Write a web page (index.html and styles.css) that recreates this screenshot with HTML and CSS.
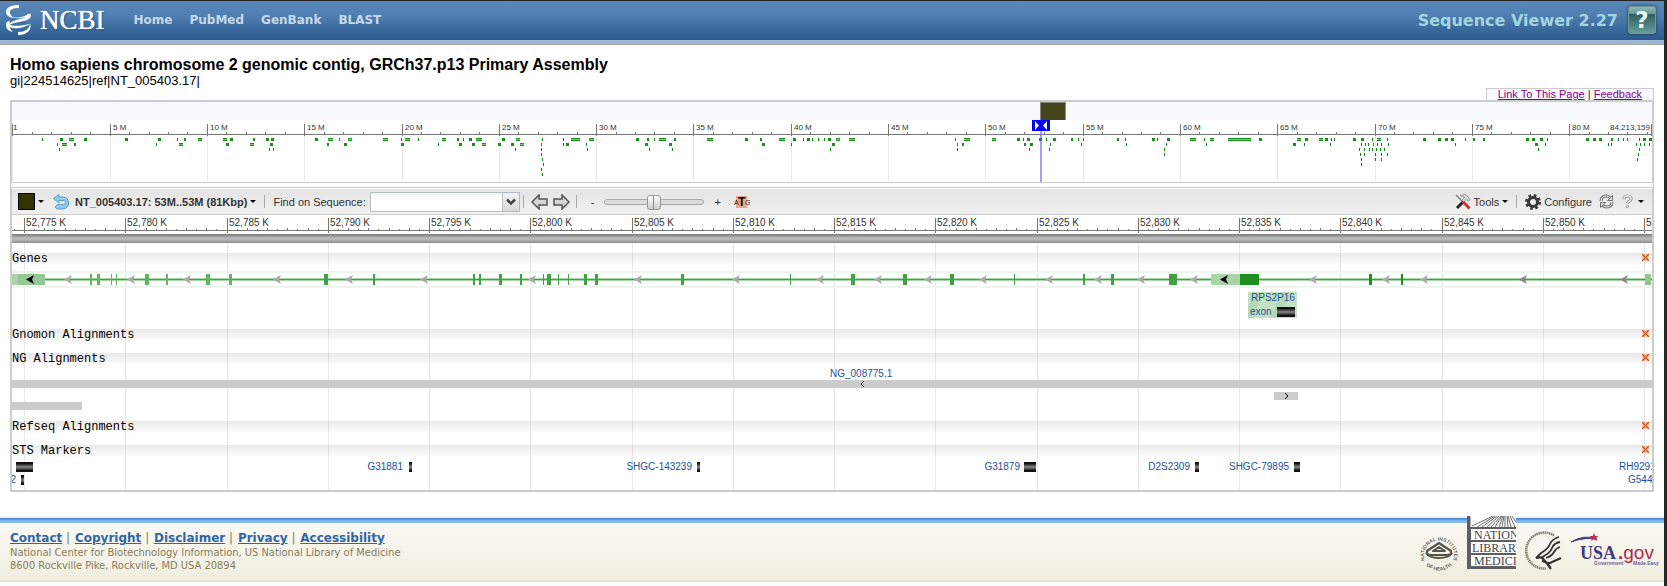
FILE: index.html
```html
<!DOCTYPE html>
<html lang="en">
<head>
<meta charset="utf-8">
<title>NCBI Sequence Viewer 2.27</title>
<link rel="stylesheet" href="styles.css">
</head>
<body>
<header class="masthead">
  <a class="brand" href="#" aria-label="NCBI home">
    <svg class="helix" viewBox="0 0 26 30" aria-hidden="true">
      <path d="M13 0C4 0 0 3 0 7s4 5 8 6c-3-2-4-4-4-6 0-3 4-4 9-4z"/>
      <path d="M1 10c5 4 17 3 21-1q3-1 3 1c0 4-5 6-12 7-5 1-9 2-10 3 2-4 7-5 11-6 3-1 5-1 6-2-6 2-15 2-19-2z"/>
      <path d="M0 19c0 5 2 7 7 8-2-2-3-3-3-5 5 3 16 0 20-3-6 1-14 3-19 1-1-1-2-2-1-4-2 0-4 1-4 3z"/>
      <path d="M24 18c2 6-2 12-12 12v-3c7 0 12-3 12-9z"/>
    </svg>
    <span>NCBI</span>
  </a>
  <nav class="nav">
    <a href="#">Home</a><a href="#">PubMed</a><a href="#">GenBank</a><a href="#">BLAST</a>
  </nav>
  <span class="product">Sequence Viewer 2.27</span>
  <button class="help" type="button" aria-label="Help">?</button>
</header>

<main class="content">
  <h1 class="title">Homo sapiens chromosome 2 genomic contig, GRCh37.p13 Primary Assembly</h1>
  <p class="accession">gi|224514625|ref|NT_005403.17|</p>
  <div class="page-links"><a href="#">Link To This Page</a> | <a href="#">Feedback</a></div>

  <section class="overview" aria-label="Sequence overview">
    <svg class="plot" id="overview"></svg>
  </section>
  <div class="splitter"></div>

  <section class="viewer" aria-label="Graphical view">
    <div class="toolbar">
      <button class="tool swatch-tool" type="button" aria-label="Marker colour"><span class="swatch"></span><span class="caret"></span></button>
      <button class="tool undo" type="button" aria-label="Go back">
        <svg width="16" height="16" viewBox="0 0 16 16"><path d="M6 .5L.5 4.500 6 9V6.500H10q2.500 0 2.500 2T10 10.500H4.500L2 13l2 2h6q5.500-.500 5.500-6T10 3H6z" fill="#8fcbea" stroke="#5a9fc8"/></svg>
      </button>
      <button class="tool range" type="button">NT_005403.17: 53M..53M (81Kbp)<span class="caret"></span></button>
      <span class="sep"></span>
      <label class="find" for="find">Find on Sequence:</label>
      <span class="combo"><input id="find" type="text"><button type="button" aria-label="Show recent searches"><svg width="10" height="8" viewBox="0 0 10 8"><path d="M1 1.500L5 5.500 9 1.500" fill="none" stroke="#444" stroke-width="2.500"/></svg></button></span>
      <span class="sep"></span>
      <button class="tool arrow" type="button" aria-label="Pan left"><svg width="17" height="16" viewBox="0 0 17 16"><path d="M1 8L8 1v4h8v6H8v4z" fill="#d4d4d4" stroke="#555" stroke-width="1.500"/></svg></button>
      <button class="tool arrow" type="button" aria-label="Pan right"><svg width="17" height="16" viewBox="0 0 17 16"><path d="M16 8L9 1v4H1v6h8v4z" fill="#d4d4d4" stroke="#555" stroke-width="1.500"/></svg></button>
      <span class="sep"></span>
      <button class="tool zoom" type="button" aria-label="Zoom out">-</button>
      <input class="slider" type="range" min="0" max="100" value="50" aria-label="Zoom level">
      <button class="tool zoom" type="button" aria-label="Zoom in">+</button>
      <button class="tool atg" type="button" aria-label="Zoom to sequence"><svg width="16" height="14" viewBox="0 0 16 14"><rect x="2" y="1" width="11" height="12" fill="#e9a68c"/><text x="0" y="10" class="atg-side">A</text><text x="11" y="10" class="atg-side">G</text><text x="4" y="11" class="atg-mid">T</text></svg></button>

      <button class="tool tools" type="button">
        <svg width="16" height="16" viewBox="0 0 16 16"><path d="M8.500 7.500L2 14" stroke="#222" stroke-width="3"/><path d="M7 6.500l7.500 8" stroke="#d22f2f" stroke-width="3"/><path d="M1 1l6 6" stroke="#888" stroke-width="1.500"/><path d="M5 1.500Q10-1 13 2.500l2 3.500-2 1-1.500-2L9 8 7 6l2.500-3z" fill="#ddd" stroke="#888" stroke-width=".800"/></svg>
        Tools<span class="caret"></span></button>
      <span class="sep"></span>
      <button class="tool configure" type="button">
        <svg width="16" height="16" viewBox="0 0 16 16"><circle cx="8" cy="8" r="6.500" fill="none" stroke="#3a3a3a" stroke-width="3" stroke-dasharray="2.550"/><circle cx="8" cy="8" r="4.500" fill="#eee" stroke="#3a3a3a" stroke-width="3"/></svg>
        Configure</button>
      <button class="tool refresh" type="button" aria-label="Refresh"><svg width="15" height="15" viewBox="0 0 15 15" fill="none"><path d="M2 7q0-5 5.500-5Q10 2 11.500 4" stroke="#777" stroke-width="3"/><path d="M13 8q0 5-5.500 5Q5 13 3.500 11" stroke="#777" stroke-width="3"/><path d="M2 7q0-5 5.500-5Q10 2 11.500 4M13 8q0 5-5.500 5Q5 13 3.500 11" stroke="#eee"/><path d="M13.500 1.500v5h-5zM1.500 13.500v-5h5z" fill="#ddd" stroke="#777"/></svg></button>
      <button class="tool hint" type="button" aria-label="Help menu"><svg width="11" height="15" viewBox="0 0 12 15" fill="none"><path d="M2 5q0-3.500 4-3.500t4 3Q10 6 7.500 7.500 6 8.500 6 10" stroke="#888" stroke-width="3"/><path d="M2 5q0-3.500 4-3.500t4 3Q10 6 7.500 7.500 6 8.500 6 10" stroke="#eee" stroke-width="1.500"/><circle cx="6" cy="13" r="1.300" fill="#eee" stroke="#888" stroke-width=".800"/></svg><span class="caret"></span></button>
    </div>

    <svg class="plot ruler" id="ruler"></svg>
    <div class="coverage-bar"></div>

    <div class="tracks">
      <svg class="grid" id="grid" aria-hidden="true"></svg>
      <section class="track"><h2>Genes</h2><button class="close" type="button" aria-label="Hide Genes"></button><svg class="plot genes" id="genes"></svg></section>
      <section class="track"><h2>Gnomon Alignments</h2><button class="close" type="button" aria-label="Hide Gnomon Alignments"></button></section>
      <section class="track"><h2>NG Alignments</h2><button class="close" type="button" aria-label="Hide NG Alignments"></button><svg class="plot ng" id="ng"></svg></section>
      <section class="track"><h2>Refseq Alignments</h2><button class="close" type="button" aria-label="Hide Refseq Alignments"></button></section>
      <section class="track"><h2>STS Markers</h2><button class="close" type="button" aria-label="Hide STS Markers"></button><svg class="plot sts" id="sts"></svg></section>
    </div>
  </section>
</main>

<footer class="footer">
  <div class="footer-text">
    <p class="footer-links"><a href="#">Contact</a> | <a href="#">Copyright</a> | <a href="#">Disclaimer</a> | <a href="#">Privacy</a> | <a href="#">Accessibility</a></p>
    <p>National Center for Biotechnology Information, US National Library of Medicine</p>
    <p>8600 Rockville Pike, Rockville, MD USA 20894</p>
  </div>
  <div class="logos">
    <a href="#" class="logo" aria-label="National Institutes of Health">
      <svg width="40" height="40" viewBox="0 0 40 40"><defs><path id="nih-top" d="M5.500 28.500A15 15 0 1 1 34.500 28.500"/><path id="nih-low" d="M2.500 27A18.500 18.500 0 0 0 37.500 27"/></defs>
      <text class="nih"><textPath href="#nih-top" startOffset="50%" text-anchor="middle">NATIONAL INSTITUTES</textPath></text><text class="nih"><textPath href="#nih-low" startOffset="50%" text-anchor="middle">OF HEALTH</textPath></text>
      <g fill="none" stroke="#55554a" stroke-linejoin="round"><path d="M20 12L32 20q1 4-4 4H12q-5 0-4-4z" stroke-width="2.200"/><path d="M20 16l6 4H14z" stroke-width="2"/><path d="M7 22q3 5 13 5t13-5" stroke-width="1.800"/></g></svg></a>
    <a href="#" class="logo nlm" aria-label="National Library of Medicine">
      <svg width="49" height="53" viewBox="0 0 49 53"><path d="M0 0h49v53H0z" fill="#5f5f63"/><path d="M3.500 0H49v11H3.500zM4 13h45v11H4zM4 26h45v11H4zM4 39h45v11H4z" fill="#fff"/>
      <path d="M5 10L26 0M10 11L28 0M15 11L30 0M20 11L32 0M24 11L34 0M28 11l7-11M32 11l4-11M35 11l2-11M38 11V0M41 11L40 0M44 11L41 0M48 11L43 0M49 6L45 0" stroke="#666" stroke-width="1" fill="none"/>
      <text x="7" y="23">NATIONAL</text><text x="5" y="36">LIBRARY OF</text><text x="7" y="49">MEDICINE</text></svg></a>
    <a href="#" class="logo" aria-label="Health and Human Services">
      <svg width="38" height="40" viewBox="0 0 38 40"><path d="M30 4.500A18 18 0 1 0 22 37.500" fill="none" stroke="#888878" stroke-width="2.600" stroke-dasharray="1.600 .500"/><g fill="none" stroke="#333" stroke-width="1.800"><path d="M35 6Q28 8 26 13T17 22l-5 5"/><path d="M36 11Q30 12 28 17T20 25l-3 2"/><path d="M36 16Q32 17 30 21T22 27"/><path d="M12 27q6-2 8 2t6 3l11-5M18 30q5 1 6 4l3 4M21 30l5 6" stroke-width="2.200"/></g></svg></a>
    <a href="#" class="logo" aria-label="USA.gov">
      <svg width="90" height="40" viewBox="0 0 90 40"><path d="M1 11Q14 3 27 8 14 6 1 11z" fill="#454580" stroke="#454580"/><path d="M24 2l1.200 3h3.300l-2.500 2 1 3-3-1.800-3 1.800 1-3-2.500-2h3.300z" fill="#c02d4b"/><text x="10" y="28" class="usa">USA</text><text x="48" y="28" class="gov"><tspan class="dot">.</tspan>gov</text><text x="24" y="34" class="tag">Government</text><text x="63" y="34" class="tag">Made Easy</text></svg></a>
  </div>
</footer>
<script src="app.js"></script>
</body>
</html>
```
FILE: styles.css
```css
* { box-sizing: border-box; }
body {
  margin: 0;
  min-height: 100vh;
  border-top: 1px solid #222;
  border-right: 3px solid #262626;
  background: #fff;
  color: #000;
  font-family: "Liberation Sans", Arial, sans-serif;
  font-size: 11px;
}
h1, h2, p { margin: 0; font-weight: normal; }
button { font: inherit; color: inherit; border: 0; padding: 0; background: none; }
svg { display: block; }

/* Masthead */
.masthead {
  display: flex;
  align-items: center;
  padding: 0 8px 5px 6px;
  height: 44px;
  border-bottom: 1px solid #a9a9a0;
  background: linear-gradient(#5a86b8, #5280b2 30%, #2a5a8b 39px, #9db8d4 39px);
  font-family: "DejaVu Sans", Verdana, sans-serif;
  font-weight: bold;
}
.brand {
  display: flex;
  align-items: center;
  gap: 8px;
  color: #fff;
  text-decoration: none;
  font: 27px/30px "Liberation Serif", serif;
  text-shadow: 0 0 1px #fff, 1px 1px 1px #274f7c;
}
.helix { width: 26px; height: 30px; fill: #fff; }
.nav { display: flex; gap: 17px; margin-left: 29px; }
.nav a { color: #c6d9ec; font-size: 12px; text-decoration: none; }
.product { margin-left: auto; color: #a2d6de; font-size: 16px; }
.help {
  width: 28px;
  height: 28px;
  margin-left: 10px;
  border: 1px solid #6a9c9c;
  border-radius: 3px;
  background: linear-gradient(#8fb9b6, #6a9795 25%, #31605f 28%, #659c98);
  color: #e8f8f8;
  font: bold 23px/26px "DejaVu Sans", sans-serif;
  text-align: center;
  box-shadow: 0 0 3px #234;
}

/* Page heading */
.content { padding: 11px 10px 0; display: flex; flex-direction: column; }
.title { font-size: 16px; line-height: 17px; font-weight: bold; }
.accession { font-size: 13px; line-height: 15px; }
.page-links {
  align-self: flex-end;
  padding: 0 11px;
  border: 1px solid #ccc;
  border-bottom: 0;
  background: #f8f8ff;
  color: #224;
  font-size: 11px;
  line-height: 11px;
}
.page-links a { color: #808; }

/* Overview */
.plot { width: 100%; overflow: hidden; }
.overview {
  border: 2px solid #ccc;
  border-bottom-width: 1px;
  background: linear-gradient(#f7f9ff 18px, #fff 18px);
}
.overview .plot { height: 80px; }
.splitter { height: 4px; border: 1px solid #ccc; border-width: 0 1px; }

/* Viewer */
.viewer { border: 2px solid #ccc; border-top-width: 1px; }
.toolbar {
  display: flex;
  align-items: center;
  height: 27px;
  padding: 0 8px 0 6px;
  border-top: 1px solid #fff;
  border-bottom: 1px solid #ccc;
  background: linear-gradient(#e4e4e4, #f0f0f0);
  color: #333;
  line-height: 14px;
}
.tool { display: flex; align-items: center; gap: 3px; white-space: nowrap; }
.caret { border: 3px solid transparent; border-top-color: #000; border-bottom: 0; }
.swatch { width: 17px; height: 17px; border: 1px solid #000; background: #330; }
.undo { margin-left: 9px; }
.range { margin-left: 6px; font-weight: bold; }
.sep { width: 1px; height: 13px; background: #aaa; }
.range + .sep { margin: 0 8px; }
.find { margin-right: 4px; }
.combo { display: flex; height: 20px; width: 150px; margin-right: 3px; }
.combo input {
  flex: 1;
  min-width: 0;
  border: 1px solid #b8bfc0;
  background: linear-gradient(#eef2f2, #fff 4px);
  font: inherit;
  padding: 0 3px;
}
.combo button {
  display: grid;
  place-items: center;
  width: 17px;
  border: 1px solid #b5b8c8;
  border-left: 0;
  background: linear-gradient(#f4f4f4, #d8d8d8);
}
.arrow { margin-left: 5px; }
.combo + .sep + .arrow { margin-left: 7px; }
.arrow + .sep { margin: 0 14px 0 6px; }
.slider { appearance: none; width: 100px; height: 15px; margin: 0 10px; background: none; }
.slider::-webkit-slider-runnable-track {
  height: 6px;
  border: 1px solid #aaa;
  border-radius: 3px;
  background: #dcdcdc;
}
.slider::-webkit-slider-thumb {
  appearance: none;
  width: 14px;
  height: 15px;
  margin-top: -5px;
  border: 1px solid #999;
  border-radius: 3px;
  background: linear-gradient(90deg, transparent 5px, #888 5px, #888 6px, transparent 6px), linear-gradient(#fff, #ccc);
}
.atg { margin-left: 13px; }
.atg-side { font: 7px "Liberation Sans", sans-serif; fill: #222; }
.atg-mid { font: bold 12px "Liberation Sans", sans-serif; }
.tools { margin-left: auto; }
.tools + .sep { margin: 0 8px; }
.refresh { margin: 0 8px 0 7px; }
.hint { gap: 5px; }

.ruler { height: 19px; }
.coverage-bar {
  height: 9px;
  background: linear-gradient(#777, #999 2px, #bbb 4px, #b5b5b5 6px, #888);
}

/* Tracks */
.tracks { position: relative; padding-top: 10px; }
.grid { position: absolute; inset: 0; width: 100%; height: 100%; z-index: -1; }
.track {
  display: grid;
  grid-template-columns: 1fr auto;
  align-content: start;
  min-height: 24px;
  background: linear-gradient(rgba(0, 0, 0, .09), transparent 13px);
}
.track h2 { font: 12px/12px "Liberation Mono", monospace; height: 16px; }
.close { width: 7px; height: 7px; margin: 1px 3px 0 0; }
.track .plot { grid-column: 1 / 3; }
.genes { height: 60px; }
.ng { height: 52px; }
.sts { height: 29px; }

/* Plot marks */
.tick { fill: #777; }
.line { fill: #e8e8e8; }
.label-s { font-size: 8px; fill: #333; }
.label { font-size: 10px; fill: #333; }
.name { font-size: 10px; fill: #1d509a; }
.intron-edge { fill: #a8d8a8; }
.intron { fill: #43a047; }
.halo { fill: #eef7ee; }
.aln { fill: #ccc; }

/* Footer */
.footer {
  display: flex;
  justify-content: space-between;
  align-items: flex-start;
  margin-top: 24px;
  padding: 0 4px 0 10px;
  border-bottom: 2px solid #e4e2d6;
  background: linear-gradient(#e6f2fc 2px, #4d86c0 2px, #4d86c0 3px, #7db4ea 4px, #8abdf0 7px, #faf9f4 7px, #f1eee0);
  color: #857d5c;
  font: 11px/13px "DejaVu Sans Condensed", "DejaVu Sans", sans-serif;
}
.footer-text { padding: 14px 0 8px; }
.footer-links { font: 12px/16px "DejaVu Sans", sans-serif; }
.footer-links a { color: #2f66a5; font-weight: bold; }
.footer-links a + a { margin-left: 1px; }
.logos { display: flex; gap: 8px; }
.logo { padding-top: 15px; }
.logo.nlm { padding: 0; }
.nih { font: bold 5px "Liberation Sans", sans-serif; fill: #66665a; }
.nlm text { font: 12px "Liberation Serif", serif; fill: #444; }
.usa { font: bold 18px "Liberation Serif", serif; fill: #3d3d7c; }
.gov { font: 19px "Liberation Sans", sans-serif; fill: #b22a48; }
.dot { font-weight: bold; }
.tag { font: bold 5px "Liberation Sans", sans-serif; fill: #66669a; }
```
FILE: app.js
```js
const SPAN = 1640;
const NS = 'http://www.w3.org/2000/svg';

// Overview features by row: [start, width]
const overviewRows = [
  [[30,1],[48,3],[57,5],[72,3],[113,3],[146,3],[165,1],[172,2],[186,4],[211,4],[218,3],[241,2],[254,3],[259,3],[303,3],[316,5],[327,1],[336,4],[371,5],[389,1],[393,5],[406,1],[430,4],[445,2],[451,1],[457,3],[464,6],[490,3],[504,4],[530,1],[551,1],[559,9],[577,5],[624,3],[635,2],[642,1],[647,7],[662,2],[695,6],[733,3],[748,2],[767,6],[781,3],[791,1],[795,3],[800,1],[806,1],[812,1],[816,3],[824,4],[837,6],[943,1],[952,6],[980,4],[1005,3],[1011,1],[1015,3],[1027,3],[1034,1],[1041,3],[1059,2],[1066,1],[1071,1],[1105,2],[1113,1],[1140,3],[1145,1],[1155,3],[1178,6],[1192,1],[1198,4],[1216,23],[1247,3],[1285,4],[1293,3],[1307,4],[1313,3],[1319,1],[1322,1],[1341,3],[1349,3],[1360,1],[1365,4],[1375,1],[1411,3],[1426,3],[1433,3],[1439,3],[1453,1],[1461,2],[1471,2],[1514,3],[1520,3],[1528,3],[1535,1],[1574,3],[1581,3],[1587,3],[1599,2],[1606,1],[1611,1],[1615,1],[1627,1],[1631,3],[1637,3]],
  [[45,1],[50,5],[62,2],[144,1],[167,4],[214,3],[238,4],[258,3],[315,2],[332,3],[389,3],[426,1],[447,3],[460,3],[470,4],[486,3],[499,3],[508,4],[529,1],[551,1],[554,3],[574,1],[633,3],[657,3],[750,3],[779,1],[820,3],[945,1],[950,2],[1012,2],[1018,3],[1038,1],[1069,1],[1114,1],[1154,1],[1194,1],[1281,3],[1292,1],[1318,1],[1349,1],[1353,1],[1356,1],[1361,1],[1365,1],[1369,1],[1376,1],[1443,1],[1523,3],[1533,1],[1596,1],[1599,1],[1624,1],[1628,1],[1632,1],[1637,1]],
  [[47,1],[257,1],[261,1],[503,1],[529,1],[575,1],[637,1],[660,1],[818,1],[945,1],[1017,1],[1037,1],[1152,1],[1347,1],[1352,1],[1357,1],[1360,1],[1364,1],[1368,1],[1372,1],[1526,1],[1627,1]],
  [[529,1],[1152,1],[1348,1],[1352,1],[1363,1],[1369,1],[1375,1],[1626,1]],
  [[530,1],[1349,1],[1363,1],[1369,1],[1625,1]],
  [[531,1],[1349,1]],
  [[529,1]],
  [[530,1]]
];

const exons = [[78,2],[85,3],[99,1],[104,1],[133,4],[154,2],[194,4],[217,3],[312,4],[361,2],[461,2],[467,2],[487,3],[508,2],[531,1],[535,4],[546,1],[556,1],[572,3],[583,3],[669,3],[778,1],[839,4],[891,4],[938,4],[1002,1],[1071,2],[1099,3],[1157,8],[1357,3],[1389,2]];
const strandArrows = [52,115,171,261,333,408,516,622,720,804,862,912,967,1033,1082,1125,1178,1297,1370,1408,1507,1608];
const markers = [
  ['', 0, 4, 17, 0], ['2', 4, 9, 3, 1], ['G31881', 391, 397, 3, 0],
  ['SHGC-143239', 680, 685, 3, 0], ['G31879', 1008, 1012, 12, 0],
  ['D2S2309', 1178, 1183, 4, 0], ['SHGC-79895', 1277, 1282, 6, 0]
];

function add(parent, tag, attrs, text) {
  const node = document.createElementNS(NS, tag);
  for (const key in attrs) node.setAttribute(key, attrs[key]);
  if (text !== undefined) node.textContent = text;
  parent.append(node);
  return node;
}

function draw() {
  const get = id => document.getElementById(id);
  const scale = get('ruler').getBoundingClientRect().width / SPAN;
  const X = v => Math.round(v * scale);
  const rect = (svg, x, y, w, h, attrs) =>
    add(svg, 'rect', Object.assign({ x: X(x), y, width: w, height: h }, attrs));
  const wide = (svg, x, y, w, h, attrs) => rect(svg, x, y, X(x + w) - X(x), h, attrs);
  const text = (svg, x, y, cls, value, anchor) =>
    add(svg, 'text', { x: X(x), y, class: cls, 'text-anchor': anchor || 'start' }, value);
  for (const id of ['overview', 'ruler', 'grid', 'genes', 'ng', 'sts']) get(id).replaceChildren();

  // Overview: scale, features and the visible range
  const ov = get('overview');
  wide(ov, 0, 32, SPAN, 1, { class: 'tick' });
  for (let m = 0; m <= 84; m++) {
    const x = m * 19.46 + 0.3;
    if (m % 5) { rect(ov, x, 30, 1, 2, { class: 'tick' }); continue; }
    rect(ov, x, 34, 1, 45, { class: 'line' });
    rect(ov, x, 22, 1, 12, { class: 'tick' });
    text(ov, x + (m ? 3 : 1), 28, 'label-s', m ? m + ' M' : '1');
  }
  rect(ov, 1639, 22, 1, 12, { class: 'tick' });
  text(ov, 1638, 28, 'label-s', '84,213,159', 'end');
  overviewRows.forEach((row, r) => row.forEach(([x, w]) => {
    const y = 36 + r * 5;
    rect(ov, x, y, w, 3, { fill: w > 1 ? '#189018' : '#0a8a0a' });
    if (w > 3) rect(ov, x, y + 1, w, 1, { fill: '#7cc97c' });
  }));
  rect(ov, 1028, 0, 26, 18, { fill: '#888' });
  rect(ov, 1029, 1, 24, 17, { fill: '#47451b' });
  rect(ov, 1028, 29, 2, 51, { fill: '#5050ff', opacity: 0.55 });
  rect(ov, 1020, 18, 18, 11, { fill: '#00f' });
  const f = X(1020);
  add(ov, 'path', { d: `M${f + 3} 19l4 4.5-4 4.5zM${f + 15} 19l-4 4.5 4 4.5z`, fill: '#fff' });

  // Ruler and grid
  const ruler = get('ruler');
  wide(ruler, 0, 15, SPAN, 1, { class: 'tick' });
  for (let i = -1; i < 163; i++) {
    const x = 12 + i * 10.125;
    if (i % 10) { rect(ruler, x, i % 2 ? 14 : 13, 1, i % 2 ? 1 : 2, { class: 'tick' }); continue; }
    rect(ruler, x, 3, 1, 15, { class: 'tick' });
    text(ruler, x + 2, 11, 'label', '52,' + (775 + i / 2) + ' K');
    rect(get('grid'), x, 0, 1, 300, { class: 'line' });
  }

  // Genes
  const g = get('genes');
  wide(g, 0, 2, SPAN, 2, { class: 'halo' });
  wide(g, 0, 17, SPAN, 2, { class: 'halo' });
  wide(g, 0, 9, SPAN, 3, { class: 'intron-edge' });
  wide(g, 0, 10, SPAN, 1, { class: 'intron' });
  wide(g, 0, 5, 6, 11, { fill: '#a9d3a9' });
  wide(g, 6, 5, 27, 11, { fill: '#92c892' });
  exons.forEach(([x, w]) => rect(g, x, 5, w, 11, { fill: x > 1300 ? '#1f8f1f' : x < 240 ? '#62b465' : '#43a047' }));
  wide(g, 1199, 5, 29, 11, { fill: '#a8d4a8' });
  wide(g, 1228, 5, 19, 11, { fill: '#1f8f1f' });
  wide(g, 1633, 5, 6, 11, { fill: '#8fc88f' });
  const arrow = (x, fill) => add(g, 'path', { d: `M${X(x)} 10.5l8-4.500-2 4.500 2 4.500z`, fill });
  strandArrows.forEach(x => arrow(x, x > 1500 ? '#888' : '#aaa'));
  arrow(14, '#000');
  arrow(1208, '#000');
  rect(g, 1236, 23, 49, 26, { fill: '#c3e2c3' });
  const bx = X(1236);
  add(g, 'path', { d: `M${bx} 38l6-15h10l-12 26h-4zM${bx + 22} 49l12-26h9l-12 26z`, fill: '#b4d8b4' });
  text(g, 1239, 32, 'name', 'RPS2P16');
  text(g, 1238, 46, 'name', 'exon');
  bar(g, X(1265), 38, 18);

  // NG alignments
  const ng = get('ng');
  wide(ng, 0, 11, SPAN, 8, { class: 'aln' });
  wide(ng, 0, 33, 70, 8, { class: 'aln' });
  rect(ng, 1262, 23, 24, 8, { class: 'aln' });
  text(ng, 818, 8, 'name', 'NG_008775.1');
  add(ng, 'path', { d: `M${X(850) + 2} 12l-3 3 3 3M${X(1273)} 24l3 3-3 3`, fill: 'none', stroke: '#000' });

  // STS markers
  const sts = get('sts');
  markers.forEach(([name, end, x, w, row]) => {
    text(sts, end, 9 + row * 13, 'name', name, 'end');
    bar(sts, X(x), 1 + row * 13, w);
  });
  text(sts, 1607, 9, 'name', 'RH9291');
  text(sts, 1616, 22, 'name', 'G544');
}

// Dark bar with a lighter centre
function bar(svg, x, y, w) {
  [['#111', 0, 10], ['#333', 2, 6], ['#555', 3, 4], ['#777', 4, 2]].forEach(([fill, dy, height]) =>
    add(svg, 'rect', { x, y: y + dy, width: w, height, fill }));
}

document.querySelectorAll('.close').forEach(button => {
  const svg = add(button, 'svg', { width: 7, height: 7, viewBox: '0 0 7 7' });
  add(svg, 'path', { d: 'M0 0l7 7M7 0L0 7', stroke: '#e89a60', 'stroke-width': 3 });
  for (let i = 0; i < 7; i++) {
    add(svg, 'rect', { x: i, y: i, width: 1, height: 1, fill: '#c8501e' });
    add(svg, 'rect', { x: 6 - i, y: i, width: 1, height: 1, fill: '#c8501e' });
  }
});

draw();
window.addEventListener('resize', draw);
```
